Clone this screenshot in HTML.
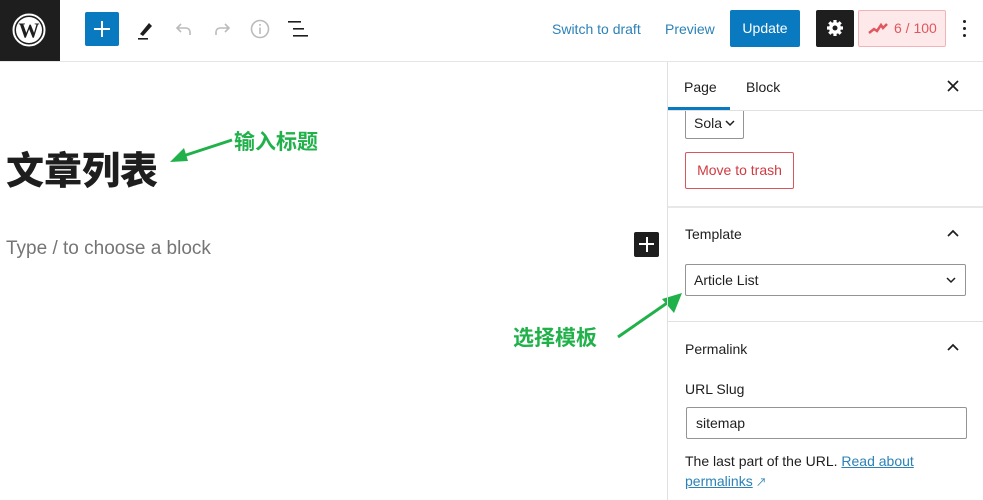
<!DOCTYPE html>
<html><head><meta charset="utf-8"><style>
*{margin:0;padding:0;box-sizing:border-box}
body{width:983px;height:500px;overflow:hidden;background:#fff;font-family:"Liberation Sans","Noto Sans CJK SC",sans-serif;color:#1e1e1e;position:relative}
.a{position:absolute}
.t{font-size:14px}
</style></head><body>
<div class="a" style="left:0;top:0;width:60px;height:61px;background:#1e1e1e"></div>
<svg class="a" style="left:12px;top:13px" width="34" height="34" viewBox="0 0 34 34"><circle cx="17" cy="17" r="15.5" fill="none" stroke="#fff" stroke-width="2"/><circle cx="17" cy="17" r="13" fill="#fff"/><text x="17" y="24.5" text-anchor="middle" font-family="Liberation Serif" font-weight="bold" font-size="21" fill="#1e1e1e">W</text></svg>
<div class="a" style="left:0;top:61px;width:983px;height:1px;background:#e5e5e5"></div>
<div class="a" style="left:85px;top:12px;width:34px;height:34px;background:#0a7ac0;border-radius:2px"></div>
<div class="a" style="left:94px;top:28px;width:16px;height:2px;background:#fff"></div>
<div class="a" style="left:101px;top:21px;width:2px;height:16px;background:#fff"></div>
<svg class="a" style="left:135px;top:17px" width="24" height="24"><path d="M5 17 L14 6 L17 9 L8 19 Z" fill="#1e1e1e"/><rect x="3" y="21" width="10" height="1.6" fill="#1e1e1e"/></svg>
<svg class="a" style="left:172px;top:17px" width="24" height="24" fill="none" stroke="#bbb" stroke-width="1.6"><path d="M9 7 L5 11 L9 15 M5 11 H14 a4 4 0 0 1 4 4 V18"/></svg>
<svg class="a" style="left:210px;top:17px" width="24" height="24" fill="none" stroke="#bbb" stroke-width="1.6"><path d="M15 7 L19 11 L15 15 M19 11 H10 a4 4 0 0 0 -4 4 V18"/></svg>
<svg class="a" style="left:248px;top:17px" width="24" height="24" fill="none" stroke="#bbb" stroke-width="1.6"><circle cx="12" cy="12" r="8.5"/><path d="M12 10.5V17M12 7v1.8"/></svg>
<svg class="a" style="left:286px;top:17px" width="24" height="24" fill="#1e1e1e"><rect x="2" y="4" width="13" height="1.6"/><rect x="7" y="11" width="11" height="1.6"/><rect x="7" y="18" width="15" height="1.6"/></svg>
<div class="a t" style="left:552px;top:21px;color:#2a82b8">Switch to draft</div>
<div class="a t" style="left:665px;top:21px;color:#2a82b8">Preview</div>
<div class="a" style="left:730px;top:10px;width:70px;height:37px;background:#0a7ac0;border-radius:2px;color:#fff;font-size:14px;line-height:37px;text-align:center">Update</div>
<div class="a" style="left:816px;top:10px;width:38px;height:37px;background:#1e1e1e;border-radius:2px"></div>
<svg class="a" style="left:825px;top:18px" width="20" height="20" viewBox="0 0 20 20"><g fill="#fff"><circle cx="10" cy="10" r="6"/><g stroke="#fff" stroke-width="3.2"><path d="M10 2v16M2 10h16M4.3 4.3l11.4 11.4M15.7 4.3L4.3 15.7"/></g></g><circle cx="10" cy="10" r="2.5" fill="#1e1e1e"/></svg>
<div class="a" style="left:858px;top:10px;width:88px;height:37px;background:#fde9ea;border:1px solid #f0b4b8;border-radius:2px;color:#e0575e;font-size:14px;line-height:35px;padding-left:35px">6 / 100</div>
<svg class="a" style="left:868px;top:21px" width="22" height="14"><path d="M1 12 L6 8 L9 10 L13 4 L15 7 L19 3" fill="none" stroke="#e0575e" stroke-width="2.5"/></svg>
<div class="a" style="left:963px;top:20px;width:3px;height:3px;background:#1e1e1e;border-radius:50%;box-shadow:0 7px 0 #1e1e1e,0 14px 0 #1e1e1e"></div>
<div class="a" style="left:6px;top:145px;font-size:38px;font-weight:900;font-family:'Noto Sans CJK SC',sans-serif;line-height:46px">文章列表</div>
<div class="a" style="left:234px;top:126px;font-size:21px;font-weight:bold;color:#21b14a;font-family:'Noto Sans CJK SC',sans-serif">输入标题</div>
<svg class="a" style="left:160px;top:130px" width="80" height="40"><path d="M72 10 L20 27" stroke="#21b14a" stroke-width="3"/><path d="M10 32 L24 18 L28 31 Z" fill="#21b14a"/></svg>
<div class="a" style="left:6px;top:238px;font-size:19px;color:#757575">Type / to choose a block</div>
<div class="a" style="left:634px;top:232px;width:25px;height:25px;background:#1e1e1e;border-radius:2px"></div>
<div class="a" style="left:639px;top:243px;width:15px;height:2px;background:#fff"></div>
<div class="a" style="left:646px;top:237px;width:2px;height:15px;background:#fff"></div>
<div class="a" style="left:513px;top:322px;font-size:21px;font-weight:bold;color:#21b14a;font-family:'Noto Sans CJK SC',sans-serif">选择模板</div>
<svg class="a" style="left:610px;top:285px" width="80" height="60"><path d="M8 52 L60 16" stroke="#21b14a" stroke-width="3"/><path d="M72 8 L52 14 L64 28 Z" fill="#21b14a"/></svg>
<div class="a" style="left:667px;top:62px;width:1px;height:438px;background:#e0e0e0"></div>
<div class="a t" style="left:684px;top:79px">Page</div>
<div class="a t" style="left:746px;top:79px">Block</div>
<div class="a" style="left:668px;top:107px;width:62px;height:3px;background:#0a7ac0"></div>
<div class="a" style="left:668px;top:110px;width:315px;height:1px;background:#e0e0e0"></div>
<svg class="a" style="left:946px;top:79px" width="14" height="14" stroke="#1e1e1e" stroke-width="1.7"><path d="M2 2L12 12M12 2L2 12"/></svg>
<div class="a" style="left:685px;top:111px;width:59px;height:28px;border:1px solid #949494;border-top:none;border-radius:0 0 2px 2px;font-size:14px;padding:4px 0 0 8px">Sola</div>
<svg class="a" style="left:725px;top:119px" width="10" height="8"><path d="M1 2l4 4 4-4" fill="none" stroke="#1e1e1e" stroke-width="1.5"/></svg>
<div class="a" style="left:685px;top:152px;width:109px;height:37px;border:1px solid #d9555c;border-radius:2px;color:#d03a41;font-size:14px;line-height:35px;text-align:center">Move to trash</div>
<div class="a" style="left:668px;top:206px;width:315px;height:2px;background:#e8e8e8"></div>
<div class="a t" style="left:685px;top:226px">Template</div>
<svg class="a" style="left:946px;top:228px" width="14" height="10"><path d="M2 8l5-5 5 5" fill="none" stroke="#1e1e1e" stroke-width="1.7"/></svg>
<div class="a" style="left:685px;top:264px;width:281px;height:32px;border:1px solid #949494;border-radius:2px;font-size:14px;padding:7px 0 0 8px">Article List</div>
<svg class="a" style="left:946px;top:276px" width="10" height="8"><path d="M1 2l4 4 4-4" fill="none" stroke="#1e1e1e" stroke-width="1.5"/></svg>
<div class="a" style="left:668px;top:321px;width:315px;height:1px;background:#e0e0e0"></div>
<div class="a t" style="left:685px;top:341px">Permalink</div>
<svg class="a" style="left:946px;top:342px" width="14" height="10"><path d="M2 8l5-5 5 5" fill="none" stroke="#1e1e1e" stroke-width="1.7"/></svg>
<div class="a t" style="left:685px;top:381px">URL Slug</div>
<div class="a" style="left:686px;top:407px;width:281px;height:32px;border:1px solid #949494;border-radius:2px;font-size:14px;padding:7px 0 0 9px">sitemap</div>
<div class="a" style="left:685px;top:451px;font-size:14px;line-height:20px;width:290px">The last part of the URL. <span style="color:#2a82b8;text-decoration:underline">Read about<br>permalinks</span><span style="color:#2a82b8;font-size:11px"> ↗</span></div>
</body></html>
